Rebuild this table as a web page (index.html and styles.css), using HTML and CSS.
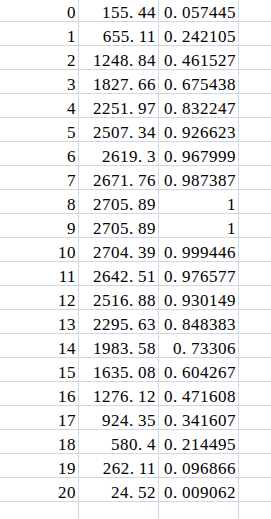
FILE: index.html
```html
<!DOCTYPE html>
<html>
<head>
<meta charset="utf-8">
<link rel="stylesheet" href="styles.css">
</head>
<body>
<div class="sheet">
  <div class="c idx">0</div><div class="c">155<span class="d">.</span>44</div><div class="c">0<span class="d">.</span>057445</div><div class="c e"></div>
  <div class="c idx">1</div><div class="c">655<span class="d">.</span>11</div><div class="c">0<span class="d">.</span>242105</div><div class="c e"></div>
  <div class="c idx">2</div><div class="c">1248<span class="d">.</span>84</div><div class="c">0<span class="d">.</span>461527</div><div class="c e"></div>
  <div class="c idx">3</div><div class="c">1827<span class="d">.</span>66</div><div class="c">0<span class="d">.</span>675438</div><div class="c e"></div>
  <div class="c idx">4</div><div class="c">2251<span class="d">.</span>97</div><div class="c">0<span class="d">.</span>832247</div><div class="c e"></div>
  <div class="c idx">5</div><div class="c">2507<span class="d">.</span>34</div><div class="c">0<span class="d">.</span>926623</div><div class="c e"></div>
  <div class="c idx">6</div><div class="c">2619<span class="d">.</span>3</div><div class="c">0<span class="d">.</span>967999</div><div class="c e"></div>
  <div class="c idx">7</div><div class="c">2671<span class="d">.</span>76</div><div class="c">0<span class="d">.</span>987387</div><div class="c e"></div>
  <div class="c idx">8</div><div class="c">2705<span class="d">.</span>89</div><div class="c">1</div><div class="c e"></div>
  <div class="c idx">9</div><div class="c">2705<span class="d">.</span>89</div><div class="c">1</div><div class="c e"></div>
  <div class="c idx">10</div><div class="c">2704<span class="d">.</span>39</div><div class="c">0<span class="d">.</span>999446</div><div class="c e"></div>
  <div class="c idx">11</div><div class="c">2642<span class="d">.</span>51</div><div class="c">0<span class="d">.</span>976577</div><div class="c e"></div>
  <div class="c idx">12</div><div class="c">2516<span class="d">.</span>88</div><div class="c">0<span class="d">.</span>930149</div><div class="c e"></div>
  <div class="c idx">13</div><div class="c">2295<span class="d">.</span>63</div><div class="c">0<span class="d">.</span>848383</div><div class="c e"></div>
  <div class="c idx">14</div><div class="c">1983<span class="d">.</span>58</div><div class="c">0<span class="d">.</span>73306</div><div class="c e"></div>
  <div class="c idx">15</div><div class="c">1635<span class="d">.</span>08</div><div class="c">0<span class="d">.</span>604267</div><div class="c e"></div>
  <div class="c idx">16</div><div class="c">1276<span class="d">.</span>12</div><div class="c">0<span class="d">.</span>471608</div><div class="c e"></div>
  <div class="c idx">17</div><div class="c">924<span class="d">.</span>35</div><div class="c">0<span class="d">.</span>341607</div><div class="c e"></div>
  <div class="c idx">18</div><div class="c">580<span class="d">.</span>4</div><div class="c">0<span class="d">.</span>214495</div><div class="c e"></div>
  <div class="c idx">19</div><div class="c">262<span class="d">.</span>11</div><div class="c">0<span class="d">.</span>096866</div><div class="c e"></div>
  <div class="c idx">20</div><div class="c">24<span class="d">.</span>52</div><div class="c">0<span class="d">.</span>009062</div><div class="c e"></div>
  <div class="c idx"></div><div class="c"></div><div class="c"></div><div class="c e"></div>
</div>
</body>
</html>
```

FILE: styles.css
```css
html, body {
  margin: 0;
  padding: 0;
  background: #ffffff;
  overflow: hidden;
}
.sheet {
  display: grid;
  grid-template-columns: 79px 80px 80px 40px;
  grid-auto-rows: 24px;
  margin-top: -2px;
  font-family: "Liberation Serif", "Times New Roman", serif;
  font-size: 17px;
  color: #000000;
}
.c {
  box-sizing: border-box;
  border-right: 1px solid #d0d7e5;
  border-bottom: 1px solid #d0d7e5;
  display: flex;
  justify-content: flex-end;
  align-items: flex-end;
  line-height: 16px;
  padding: 0 2px 0 0;
  letter-spacing: 0.5px;
  white-space: nowrap;
}
.d {
  display: inline-block;
  width: 9px;
  text-align: left;
  letter-spacing: 0;
}
.e {
  border-right: none;
}
```
